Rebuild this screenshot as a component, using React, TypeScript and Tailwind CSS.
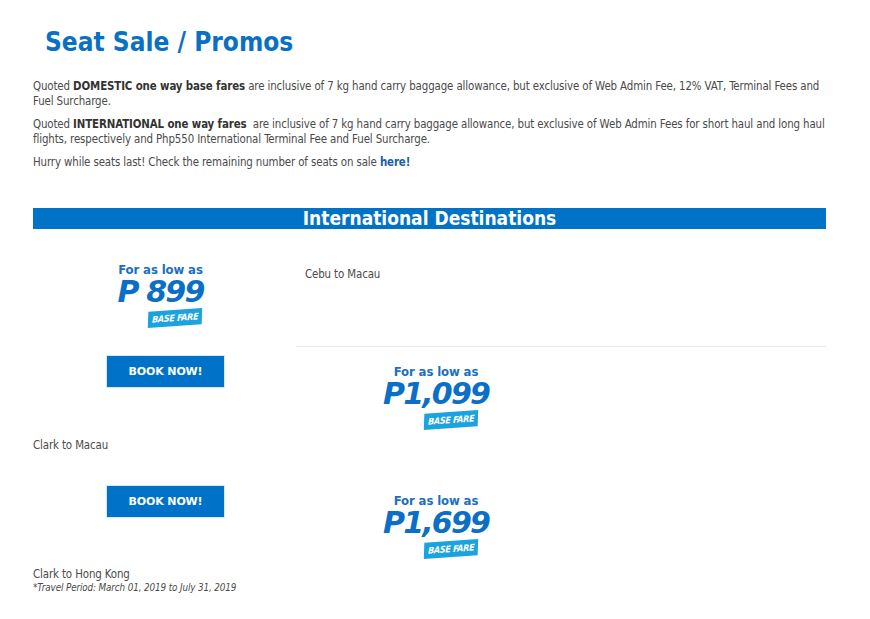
import React from "react";

const body = { fontFamily: '"DejaVu Sans Condensed", "DejaVu Sans", Tahoma, sans-serif' };

function Price({ amount }: { amount: string }) {
  return (
    <div className="flex flex-col items-center select-none">
      <div className="text-[13px] font-bold leading-[15px] text-[#1b6fc1]" style={body}>
        For as low as
      </div>
      <div
        className="text-[30px] font-extrabold italic leading-[30px] tracking-[-1.8px] text-[#0b6fc6]"
        style={{ fontFamily: '"DejaVu Sans", Verdana, sans-serif' }}
      >
        {amount}
      </div>
      <div className="ml-[30px] mt-[3px] -rotate-[4deg] -skew-x-6 bg-[#1ba3df] px-[4px] py-[2px]">
        <span
          className="block text-[9px] font-bold italic leading-[12px] tracking-[-0.3px] text-white"
          style={body}
        >
          BASE FARE
        </span>
      </div>
    </div>
  );
}

function BookButton() {
  return (
    <button
      className="h-[33px] w-[119px] border border-[#d8e6f2] bg-[#0073c8] text-[11px] font-bold text-white"
      style={{ fontFamily: '"DejaVu Sans", sans-serif' }}
    >
      BOOK NOW!
    </button>
  );
}

export default function App() {
  return (
    <div
      className="min-h-[619px] w-[870px] bg-white text-[11.4px] leading-[15px] tracking-[-0.12px] text-[#4a4a4a]"
      style={body}
    >
      <div className="px-[33px] pt-[26px]">
        <h1 className="pl-[12px] text-[26px] font-bold leading-[32px] tracking-normal text-[#0a70c3]" style={body}>
          Seat Sale / Promos
        </h1>

        <div className="mt-[21px] w-[793px] space-y-[8px]">
          <p>
            Quoted <b className="text-[#333]">DOMESTIC one way base fares</b> are inclusive of 7 kg hand carry baggage
            allowance, but exclusive of Web Admin Fee, 12% VAT, Terminal Fees and Fuel Surcharge.
          </p>
          <p>
            Quoted <b className="text-[#333]">INTERNATIONAL one way fares</b>&nbsp; are inclusive of 7 kg hand carry
            baggage allowance, but exclusive of Web Admin Fees for short haul and long haul flights, respectively and
            Php550 International Terminal Fee and Fuel Surcharge.
          </p>
          <p>
            Hurry while seats last! Check the remaining number of seats on sale{" "}
            <a className="font-bold text-[#1a5fa8]">here!</a>
          </p>
        </div>

        <div className="mt-[38px] h-[21px] w-[793px] bg-[#0073c9] text-center tracking-normal">
          <span className="text-[19px] font-bold leading-[21px] text-white" style={body}>
            International Destinations
          </span>
        </div>

        <div className="flex w-[793px]">
          <div className="flex w-[255px] flex-col items-center pt-[33px]">
            <Price amount="P 899" />
          </div>
          <div className="ml-[8px] h-[118px] flex-1 border-b border-[#e8e8e8] pl-[9px] pt-[38px]">Cebu to Macau</div>
        </div>

        <div className="flex h-[91px] w-[793px]">
          <div className="w-[263px] pl-[73px] pt-[8px]">
            <BookButton />
          </div>
          <div className="w-[280px] pt-[17px]">
            <Price amount="P1,099" />
          </div>
        </div>

        <div>Clark to Macau</div>

        <div className="flex h-[114px] w-[793px]">
          <div className="w-[263px] pl-[73px] pt-[32px]">
            <BookButton />
          </div>
          <div className="w-[280px] pt-[40px]">
            <Price amount="P1,699" />
          </div>
        </div>

        <div>Clark to Hong Kong</div>
        <div className="text-[9.8px] italic leading-[11px]">*Travel Period: March 01, 2019 to July 31, 2019</div>
      </div>
    </div>
  );
}
